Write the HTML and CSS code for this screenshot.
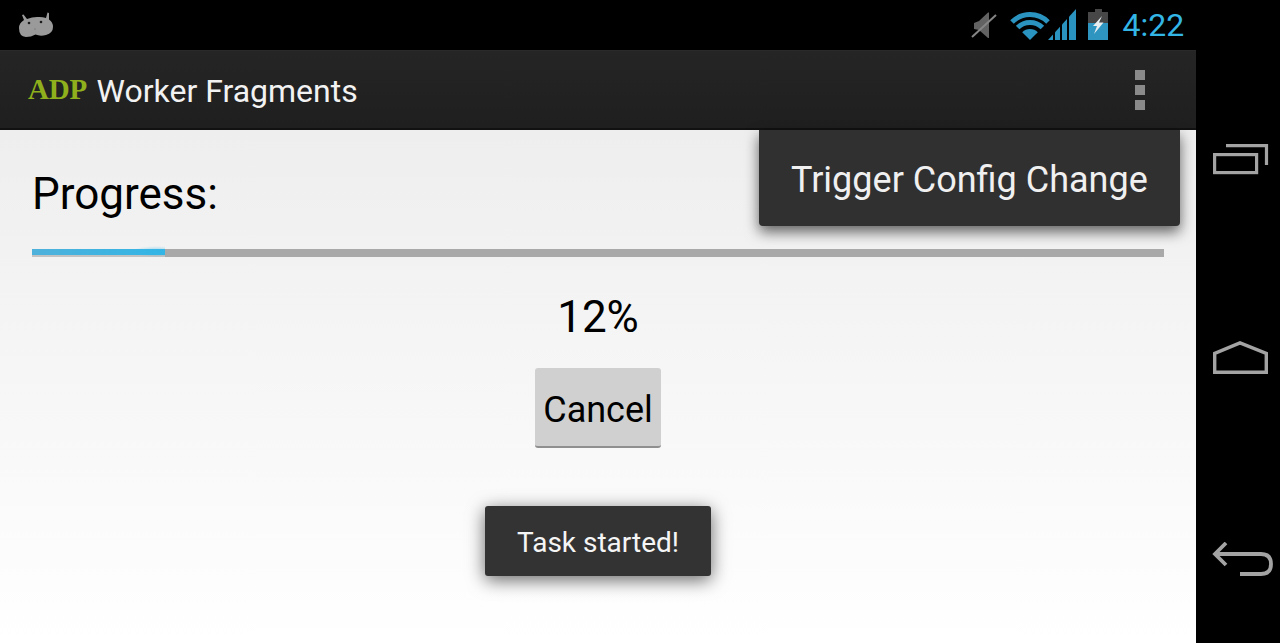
FILE: index.html
```html
<!DOCTYPE html>
<html lang="en">
<head>
<meta charset="utf-8">
<title>Worker Fragments</title>
<link rel="stylesheet" href="styles.css">
</head>
<body>
<div class="device">
  <div class="screen">
    <header class="status">
      <svg class="droid" width="36" height="26" viewBox="0 0 36 26"><path fill="#9a9a9a" d="M4 3 L5.500 2.500 L9 7 Q14 5 19 5 Q24 4.500 28 6 L29.500 0.500 L31 1 L31 7.500 Q35 10 35 15 Q35 21 28 23 Q22 24.500 17.500 22.500 Q13 25 8 25 Q1 24.500 1 16 Q1 11 6 8 Z"/><circle cx="11" cy="11" r="1.300" fill="#1c1c1c"/><circle cx="23" cy="10" r="1.300" fill="#1c1c1c"/><circle cx="17" cy="17" r="0.500" fill="#555"/></svg>
      <div class="tray">
        <svg class="i-mute" width="28" height="32" viewBox="0 0 28 32"><path fill="#626262" d="M4 14 L9 12 L18 3.500 L19 3.500 L19 29 L18 29 L9 21 L4 20 Z"/><path stroke="#858585" stroke-width="2" d="M2 28 L26 6"/></svg>
        <svg class="i-wifi" width="40" height="32" viewBox="0 0 40 32"><g fill="none" stroke="#2a93bf" stroke-width="5"><path d="M2 13 A25.500 25.500 0 0 1 38 13"/><path d="M7.600 18.600 A17.500 17.500 0 0 1 32.400 18.600"/></g><path fill="#2a93bf" d="M20 31 L12.200 23.200 A11 11 0 0 1 27.800 23.200 Z"/></svg>
        <svg class="i-signal" width="28" height="32" viewBox="0 0 28 32"><g fill="#2a93bf"><path d="M0 31 L5 25.500 L5 31 Z"/><path d="M7 23.250 L12 17.700 L12 31 L7 31 Z"/><path d="M14 15.500 L19 10 L19 31 L14 31 Z"/><path d="M21 7.750 L28 0 L28 31 L21 31 Z"/></g></svg>
        <svg class="i-batt" width="20" height="32" viewBox="0 0 20 32"><path fill="#474747" d="M7 0 L14 0 L14 3 L20 3 L20 14 L0 14 L0 3 L7 3 Z"/><rect y="14" width="20" height="17" fill="#2e94c0"/><path fill="#e6eef1" d="M14 7 L5 17 L9 17 L6 25 L15.500 13.500 L11 13.500 Z"/></svg>
        <span class="clock">4:22</span>
      </div>
    </header>
    <div class="actionbar">
      <span class="logo">ADP</span>
      <h1 class="title">Worker Fragments</h1>
      <div class="overflow"><i></i><i></i><i></i></div>
    </div>
    <main class="content">
      <div class="label">Progress:</div>
      <div class="track"><div class="fill"></div></div>
      <div class="percent">12%</div>
      <button class="cancel">Cancel</button>
    </main>
    <div class="menu">Trigger Config Change</div>
    <div class="toast">Task started!</div>
  </div>
  <nav class="navbar">
    <svg class="nav-recents" width="62" height="34" viewBox="0 0 62 34"><g fill="none" stroke="#a3a3a3" stroke-width="3.200"><rect x="2.600" y="10.600" width="42" height="18"/><path d="M14 1.600 L54.500 1.600 L54.500 21"/></g></svg>
    <svg class="nav-home" width="62" height="38" viewBox="0 0 62 38"><path fill="none" stroke="#a3a3a3" stroke-width="3.400" d="M2.700 31.300 L2.700 12.500 L28 1.900 L54.300 12.500 L54.300 31.300 Z"/></svg>
    <svg class="nav-back" width="62" height="36" viewBox="0 0 62 36"><path fill="none" stroke="#a3a3a3" stroke-width="3.800" d="M14 1 L3 12 L14 23 M3 12 L49 12 Q59 12 59 22 Q59 32 49 32 L28 32"/></svg>
  </nav>
</div>
</body>
</html>
```
FILE: styles.css
```css
* { box-sizing: border-box; }
html, body { margin: 0; padding: 0; height: 100%; background: #000; overflow: hidden; }
body { font-family: Roboto, "Liberation Sans", sans-serif; }
.device { display: flex; width: 1280px; height: 643px; }
.screen { position: relative; width: 1196px; height: 643px; display: flex; flex-direction: column; }
.status { height: 50px; background: #000; display: flex; align-items: center; justify-content: space-between; padding: 0 12px 0 18px; }
.tray { display: flex; align-items: center; }
.i-mute { margin-right: 12px; }
.i-wifi { margin-right: -2px; }
.i-signal { margin-right: 12px; }
.i-batt { margin-right: 14.500px; }
.clock { color: #33b5e5; font-size: 32px; line-height: 50px; width: 61.500px; }
.actionbar { height: 80px; background: linear-gradient(#252525, #1f1f1f); border-top: 1px solid #2a2a2a; border-bottom: 2px solid #111; display: flex; align-items: center; padding: 0 51px 0 28px; }
.logo { font-family: "Liberation Serif", serif; font-weight: bold; color: #8fb01c; font-size: 29px; letter-spacing: -0.2px; width: 68.500px; margin-top: -1px; }
.title { margin: 2px 0 0; flex: 1; font-size: 32px; font-weight: 400; color: #f2f2f2; }
.overflow { display: flex; flex-direction: column; gap: 5px; }
.overflow i { display: block; width: 10px; height: 10px; background: #8a8a8a; }
.content { flex: 1; background: linear-gradient(#eeeeee, #ffffff); padding: 34px 32px 0; display: flex; flex-direction: column; align-items: center; }
.label { align-self: flex-start; font-size: 44px; line-height: 60px; color: #000; }
.track { align-self: stretch; height: 8px; margin-top: 25px; background: #a9a9a9; }
.fill { position: relative; width: 133px; height: 8px; background: linear-gradient(90deg, #4eb1db, #33b5e5); background-size: 100% 6px; background-repeat: no-repeat; background-color: #c2c2c2; }
.fill::after { content: ""; position: absolute; right: 0; top: -3px; width: 34px; height: 11px; background: radial-gradient(ellipse at 75% 50%, rgba(51,181,229,.55), rgba(51,181,229,0) 70%); }
.percent { font-size: 44px; line-height: 60px; margin-top: 30px; color: #000; }
.cancel { margin-top: 21px; width: 126px; height: 80px; padding: 5px 0 0; border: 0; border-bottom: 2px solid #8f8f8f; border-radius: 3px; background: #d0d0d0; font: 400 36px Roboto, sans-serif; color: #000; }
.menu { position: absolute; left: 759px; top: 130px; width: 421px; height: 96px; background: #303030; border-radius: 0 0 4px 4px; color: #f0f0f0; font-size: 36px; line-height: 100px; padding-left: 32px; box-shadow: 0 6px 14px rgba(0,0,0,.6); }
.toast { position: absolute; left: 485px; top: 506px; width: 226px; height: 70px; background: #333; border-radius: 3px; color: #f5f5f5; font-size: 28px; line-height: 74px; text-align: center; box-shadow: 0 4px 18px rgba(0,0,0,.6); }
.navbar { width: 84px; height: 643px; background: #000; display: flex; flex-direction: column; align-items: flex-start; padding: 144px 0 0 16px; gap: 163px; }
```
